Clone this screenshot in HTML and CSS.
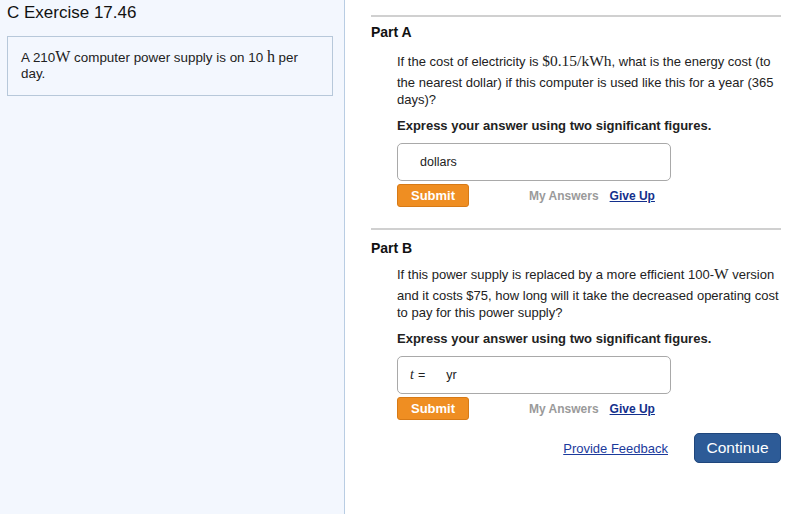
FILE: index.html
```html
<!DOCTYPE html>
<html>
<head>
<meta charset="utf-8">
<link rel="stylesheet" href="styles.css">
</head>
<body>
<div class="page">
  <aside class="side">
    <h1 class="title">C Exercise 17.46</h1>
    <div class="intro">A 210<span class="m">W</span> computer power supply is on 10 <span class="m">h</span> per day.</div>
  </aside>
  <main class="main">
    <section class="part">
      <h2 class="part-title">Part A</h2>
      <div class="part-body">
        <p class="q">If the cost of electricity is <span class="m mt">$0.15/kWh</span>, what is the energy cost (to the nearest dollar) if this computer is used like this for a year (365 days)?</p>
        <p class="hint">Express your answer using two significant figures.</p>
        <div class="answer"><span class="unit">dollars</span></div>
        <div class="actions">
          <button class="submit">Submit</button>
          <span class="my">My Answers</span>
          <a class="give" href="#">Give Up</a>
        </div>
      </div>
    </section>
    <section class="part part-b">
      <h2 class="part-title">Part B</h2>
      <div class="part-body">
        <p class="q">If this power supply is replaced by a more efficient 100-<span class="m mt">W</span> version and it costs $75, how long will it take the decreased operating cost to pay for this power supply?</p>
        <p class="hint">Express your answer using two significant figures.</p>
        <div class="answer"><span class="var">t</span><span class="eq">=</span><span class="unit2">yr</span></div>
        <div class="actions">
          <button class="submit">Submit</button>
          <span class="my">My Answers</span>
          <a class="give" href="#">Give Up</a>
        </div>
      </div>
    </section>
    <div class="footer">
      <a class="feedback" href="#">Provide Feedback</a>
      <button class="continue">Continue</button>
    </div>
  </main>
</div>
</body>
</html>
```

FILE: styles.css
```css
html, body {
  margin: 0;
  padding: 0;
  height: 100%;
}
body {
  font-family: "Liberation Sans", Arial, sans-serif;
  color: #222;
  background: #fff;
}
.page {
  display: grid;
  grid-template-columns: 345px 1fr;
  height: 514px;
}
.side {
  background: #f3f7fe;
  border-right: 1px solid #b9cde3;
}
.title {
  margin: 0;
  padding: 3px 0 0 7px;
  font-size: 17px;
  font-weight: normal;
  line-height: 20px;
  color: #111;
}
.intro {
  margin: 13px 0 0 7px;
  width: 297px;
  padding: 12px 14px 13px 13px;
  border: 1px solid #b7c8da;
  font-size: 13.4px;
  line-height: 16px;
}
.intro .m {
  font-size: 16px;
  line-height: 1;
}
.m {
  font-family: "Liberation Serif", "Times New Roman", serif;
  font-size: 15.5px;
}
.mt {
  display: inline-block;
  line-height: 17px;
  margin-bottom: 5px;
}
.main {
  padding: 15px 6px 0 26px;
}
.part {
  border-top: 2px solid #d0d0d0;
}
.part-b {
  margin-top: 21px;
}
.part-title {
  margin: 0;
  padding-top: 7px;
  font-size: 14px;
  line-height: 16px;
  font-weight: bold;
  color: #111;
}
.part-b .part-title {
  padding-top: 10px;
}
.part-body {
  padding-left: 26px;
}
.q {
  margin: 12px 0 0;
  font-size: 13px;
  line-height: 17px;
}
.part-b .q {
  margin-top: 9px;
}
.hint {
  margin: 10px 0 0;
  font-size: 13px;
  font-weight: bold;
  line-height: 16px;
}
.answer {
  margin-top: 9px;
  width: 272px;
  height: 36px;
  border: 1px solid #a9a9a9;
  border-radius: 5px;
  display: flex;
  align-items: center;
  font-size: 12.5px;
}
.unit {
  margin-left: 22px;
}
.var {
  margin-left: 12px;
  font-family: "Liberation Serif", serif;
  font-style: italic;
  font-size: 14px;
}
.eq {
  margin-left: 4px;
}
.unit2 {
  margin-left: 21px;
}
.actions {
  margin-top: 3px;
  display: flex;
  align-items: center;
  font-size: 12px;
  font-weight: bold;
}
.submit {
  width: 72px;
  height: 23px;
  background: #ef8e22;
  border: 1px solid #d77a16;
  border-radius: 3px;
  color: #fff;
  font-family: inherit;
  font-size: 13px;
  font-weight: bold;
  padding: 0;
}
.my {
  margin-left: 60px;
  color: #9a9a9a;
}
.give {
  margin-left: 11px;
  color: #132f8c;
  text-decoration: underline;
}
.footer {
  margin-top: 13px;
  display: flex;
  justify-content: flex-end;
  align-items: center;
}
.feedback {
  font-size: 13px;
  color: #1b3a9c;
  text-decoration: underline;
}
.continue {
  margin-left: 26px;
  width: 87px;
  height: 30px;
  background: #2d5b97;
  border: 1px solid #1f467c;
  border-radius: 5px;
  color: #fff;
  font-family: inherit;
  font-size: 15.5px;
  padding: 0;
}
```
